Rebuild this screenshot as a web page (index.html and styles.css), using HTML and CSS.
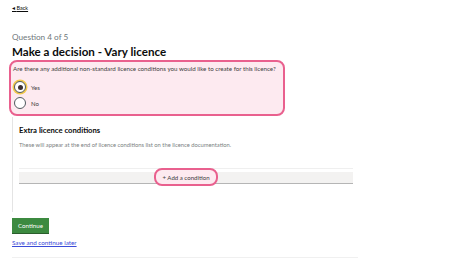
FILE: index.html
```html
<!DOCTYPE html>
<html lang="en">
<head>
    <meta charset="UTF-8">
    <title>Make a decision - Vary licence</title>
    <link rel="stylesheet" href="styles.css">
</head>
<body>
    <div class="page">
        <a class="back-link" href="#">Back</a>

        <span class="caption">Question 4 of 5</span>
        <h1 class="heading">Make a decision - Vary licence</h1>

        <!-- Question -->
        <div class="question highlight">
            <p class="question-text">Are there any additional non-standard licence conditions you would like to create for this licence?</p>
            <div class="radio">
                <span class="radio-input checked focused"></span>
                <span class="radio-label">Yes</span>
            </div>
            <div class="radio">
                <span class="radio-input"></span>
                <span class="radio-label">No</span>
            </div>
        </div>

        <!-- Conditional section -->
        <div class="conditional">
            <h2 class="section-title">Extra licence conditions</h2>
            <p class="section-hint">These will appear at the end of licence conditions list on the licence documentation.</p>
            <div class="add-row">
                <button class="add-button highlight">+ Add a condition</button>
            </div>
        </div>

        <button class="continue">Continue</button>
        <a class="save-link" href="#">Save and continue later</a>
        <div class="rule"></div>
    </div>
</body>
</html>
```

FILE: styles.css
```css
body {
    margin: 0;
    background: #fff;
    font-family: Lato, "Noto Sans", sans-serif;
    color: #0b0c0c;
}
.page {
    width: 346px;
    padding: 5px 0 0 12px;
    font-size: 6px;
    line-height: 7px;
}
.back-link {
    display: block;
    width: fit-content;
    font-size: 5.5px;
    line-height: 6px;
    color: #0b0c0c;
    text-decoration: underline;
}
.back-link::before {
    content: '\25C2  ';
}
.caption {
    display: block;
    margin-top: 21px;
    font-size: 8.2px;
    line-height: 10px;
    color: #6f777b;
}
.heading {
    margin: 2px 0 0;
    font-size: 11.6px;
    line-height: 15px;
    font-weight: 700;
}

/* pink focus highlight */
.highlight {
    border: 2px solid #e9608e;
    border-radius: 8px;
    background: #fdeaf0;
}
.question {
    width: 270px;
    margin: 1px 0 0 -3px;
    padding: 3px 0 3px 2px;
}
.question-text {
    margin: 0 0 8px;
    font-size: 6.2px;
    line-height: 8px;
    color: #3d3d3d;
}
.radio {
    display: flex;
    align-items: center;
    gap: 5px;
    height: 12px;
    margin-bottom: 4px;
    padding-left: 1px;
}
.radio:last-child {
    margin-bottom: 2px;
}
.radio-input {
    box-sizing: border-box;
    width: 12px;
    height: 12px;
    border: 1px solid #505a5f;
    border-radius: 50%;
    background: #fff;
    position: relative;
}
.radio-input.checked::after {
    content: '';
    position: absolute;
    left: 2.5px;
    top: 2.5px;
    width: 5px;
    height: 5px;
    border-radius: 50%;
    background: #3b2f33;
}
.radio-input.focused {
    box-shadow: 0 0 0 1.5px #f2c94c;
}
.radio-label {
    font-size: 6px;
    color: #3d3d3d;
}

.conditional {
    margin-top: 1px;
    padding: 8px 0 28px 6px;
    border-left: 1px solid #e4e4e4;
}
.section-title {
    margin: 0;
    font-size: 7.7px;
    line-height: 10px;
    font-weight: 700;
}
.section-hint {
    margin: 6px 0 0;
    font-size: 5.8px;
    line-height: 7px;
    color: #7a7f82;
}
.add-row {
    display: flex;
    justify-content: center;
    width: 334px;
    height: 14px;
    margin-top: 20px;
    border-top: 1px solid #efefef;
    background: linear-gradient(#fff 0 3px, #f3f2f1 3px);
    border-bottom: 1px solid #b5b5b5;
}
.add-button {
    position: relative;
    top: -1px;
    height: 18px;
    padding: 0 6px;
    font-family: inherit;
    font-size: 6.1px;
    color: #3d3d3d;
}

.continue {
    display: block;
    margin-top: 6px;
    width: 37px;
    height: 15px;
    padding: 0;
    border: none;
    background: #3c8a40;
    box-shadow: 0 1px 0 #2a5e2c;
    color: #fff;
    font-family: inherit;
    font-size: 6.2px;
}
.save-link {
    display: block;
    width: fit-content;
    margin-top: 6px;
    font-size: 6.3px;
    line-height: 7px;
    color: #3b4bd8;
    text-decoration: underline;
}
.rule {
    margin-top: 11px;
    height: 1px;
    background: #f0f0f0;
}
```
